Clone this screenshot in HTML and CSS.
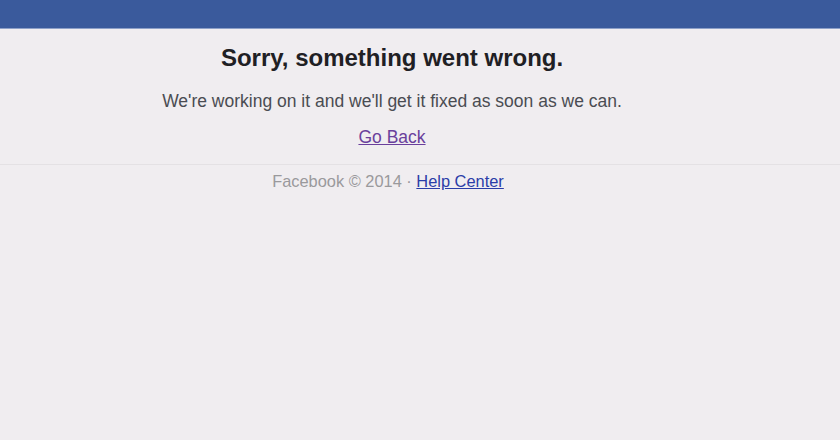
FILE: index.html
```html
<!DOCTYPE html>
<html>
<head>
<meta charset="utf-8">
<title>Sorry, something went wrong.</title>
<link rel="stylesheet" href="styles.css">
</head>
<body>
<div class="topbar"></div>
<div class="content">
	<h1>Sorry, something went wrong.</h1>
	<p class="message">We're working on it and we'll get it fixed as soon as we can.</p>
	<p class="back"><a href="#">Go Back</a></p>
</div>
<div class="footer">
	<span class="copy">Facebook &copy; 2014 &middot;</span> <a href="#">Help Center</a>
</div>
</body>
</html>
```
FILE: styles.css
```css
body {margin:0;
	background-color:#f0edf0;
	font-family:"Liberation Sans", Arial, sans-serif;}
.topbar {height:28px;
	background-color:#3a5a9c;
	border-bottom:1px solid #8da0c8;}
.content {text-align:center;
	padding:15px 56px 16px 0;
	border-bottom:1px solid #e4e1e4;}
h1 {margin:0;
	font-size:24px;
	color:#1f2024;
	line-height:28px;}
.message {margin:18px 0 0 0;
	font-size:17.5px;
	color:#4a4c52;
	line-height:22px;}
.back {margin:14px 0 0 0;
	font-size:17.5px;
	line-height:22px;}
.back a {color:#6a3f9c;}
.footer {text-align:center;
	padding:5px 64px 0 0;
	font-size:16.4px;
	line-height:22px;}
.copy {color:#9a999c;}
.footer a {color:#2b3da8;}
```
